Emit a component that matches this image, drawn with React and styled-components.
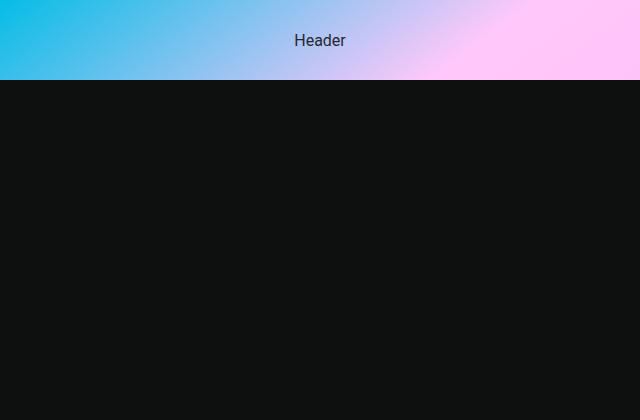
import React from "react";
import styled, { createGlobalStyle } from "styled-components";

const Global = createGlobalStyle`
  html, body { margin: 0; padding: 0; background: #0e100f; }
  body { font-family: Roboto, "Noto Sans", sans-serif; }
`;

const Page = styled.div`
  display: flex;
  flex-direction: column;
  width: 640px;
  height: 420px;
  background: #0e100f;
`;

const Header = styled.header`
  height: 80px;
  display: flex;
  align-items: center;
  justify-content: center;
  background: linear-gradient(143deg, #05bde6 0%, #ffc8fa 72%, #ffc3f9 100%);
  color: #252833;
  font-size: 16px;
  font-weight: 400;
`;

const Main = styled.main`
  flex: 1;
`;

export default function App() {
  return (
    <>
      <Global />
      <Page>
        <Header>Header</Header>
        <Main />
      </Page>
    </>
  );
}
